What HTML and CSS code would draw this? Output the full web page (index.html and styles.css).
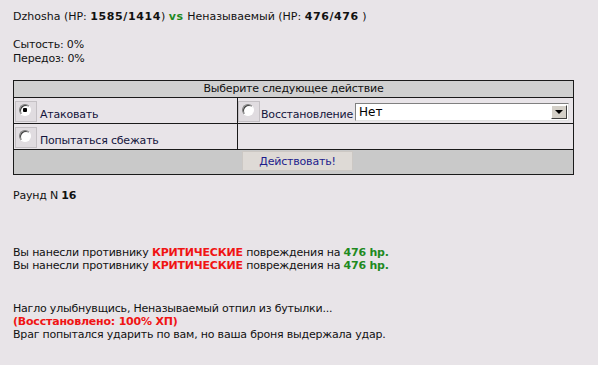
FILE: index.html
```html
<!DOCTYPE html>
<html lang="ru">
<head>
    <meta charset="UTF-8">
    <title>Бой</title>
    <link rel="stylesheet" href="styles.css">
</head>
<body>

    <div class="line">Dzhosha (HP: <b>1585/1414</b>) <b class="green">vs</b> Неназываемый (HP: <b>476/476</b> )</div>

    <div class="stats">
        <div>Сытость: 0%</div>
        <div>Передоз: 0%</div>
    </div>

    <table class="actions">
        <tr>
            <td colspan="2" class="head">Выберите следующее действие</td>
        </tr>
        <tr>
            <td class="col1">
                <label class="opt"><span class="rbox"><input type="radio" name="act" class="rd" checked></span>Атаковать</label>
            </td>
            <td>
                <div class="restore">
                    <label class="opt"><span class="rbox"><input type="radio" name="act" class="rd"></span>Восстановление</label>
                    <div class="select">
                        <span class="sel-text">Нет</span>
                        <span class="arrow"></span>
                    </div>
                </div>
            </td>
        </tr>
        <tr>
            <td class="col1">
                <label class="opt"><span class="rbox"><input type="radio" name="act" class="rd"></span>Попытаться сбежать</label>
            </td>
            <td></td>
        </tr>
        <tr>
            <td colspan="2" class="foot"><button class="btn">Действовать!</button></td>
        </tr>
    </table>

    <div class="round">Раунд N <b>16</b></div>

    <div class="log">
        <div>Вы нанесли противнику <b class="red">КРИТИЧЕСКИЕ</b> повреждения на <b class="green">476 hp.</b></div>
        <div>Вы нанесли противнику <b class="red">КРИТИЧЕСКИЕ</b> повреждения на <b class="green">476 hp.</b></div>
    </div>

    <div class="log log2">
        <div>Нагло улыбнувщись, Неназываемый отпил из бутылки...</div>
        <div><b class="red">(Восстановлено: 100% ХП)</b></div>
        <div>Враг попытался ударить по вам, но ваша броня выдержала удар.</div>
    </div>

</body>
</html>
```

FILE: styles.css
```css
body {
    margin: 0;
    padding: 10px 13px;
    background: #e8e4e8;
    color: #111;
    font-family: "DejaVu Sans", Verdana, sans-serif;
    font-size: 11px;
    line-height: 14px;
    letter-spacing: -0.2px;
}

.green {
    color: #1f8a1f;
}

.red {
    color: #f01414;
}

.line {
    letter-spacing: 0;
}

.line b {
    letter-spacing: 0.6px;
}

.stats {
    margin-top: 14px;
}

.actions {
    margin-top: 14px;
    width: 561px;
    border-collapse: collapse;
    border: 1px solid #1a1a1a;
    color: #14143c;
}

.actions td {
    border: 1px solid #1a1a1a;
    padding: 1px;
    height: 23px;
    vertical-align: top;
}

.actions .head {
    background: #d0d0d0;
    text-align: center;
    height: 16px;
    padding: 0;
    line-height: 16px;
    color: #111;
}

.actions .col1 {
    width: 221px;
}

.actions .foot {
    background: #c9c9c9;
    text-align: center;
    padding: 1px 0 2px;
    height: 21px;
}

.opt {
    display: flex;
    align-items: flex-end;
    height: 23px;
    line-height: 14px;
}

.rbox {
    display: inline-flex;
    width: 22px;
    height: 21px;
    margin-right: 3px;
    border: 1px solid #c4c0c4;
    background: #e0dce0;
    padding: 2px 0 0 3px;
    box-sizing: border-box;
    flex: none;
}

.rd {
    appearance: none;
    -webkit-appearance: none;
    margin: 0;
    width: 12px;
    height: 12px;
    border-radius: 50%;
    border: 1px solid;
    border-color: #808080 #fff #fff #808080;
    background: #fff;
    box-shadow: inset 1px 1px 0 #404040;
}

.rd:checked {
    background: radial-gradient(circle, #000 0 2px, #fff 2.5px);
}

.restore {
    display: flex;
    align-items: flex-end;
}

.restore .opt {
    margin-left: -1px;
}

.restore .rbox {
    margin-right: 1px;
}

.select {
    display: flex;
    align-items: center;
    margin-left: 2px;
    margin-bottom: 1px;
    width: 214px;
    height: 18px;
    box-sizing: border-box;
    border: 1px solid;
    border-color: #808080 #e0e0e0 #e0e0e0 #808080;
    background: #fff;
    padding: 1px;
}

.sel-text {
    flex: 1;
    padding-left: 2px;
    color: #000;
    font-size: 12px;
    letter-spacing: 0;
}

.arrow {
    width: 16px;
    height: 14px;
    box-sizing: border-box;
    background: #d4d0c8;
    border: 1px solid;
    border-color: #fff #404040 #404040 #fff;
    display: flex;
    align-items: center;
    justify-content: center;
}

.arrow::after {
    content: "";
    border-left: 4px solid transparent;
    border-right: 4px solid transparent;
    border-top: 4px solid #000;
}

.btn {
    width: 111px;
    height: 20px;
    margin-left: 8px;
    font-family: "DejaVu Sans", Verdana, sans-serif;
    font-size: 11px;
    letter-spacing: -0.2px;
    color: #1c1c8c;
    background: #dedad6;
    border: 1px solid #ccc8c4;
    padding: 0;
}

.round {
    margin-top: 14px;
}

.log {
    margin-top: 43px;
    line-height: 13px;
}

.log2 {
    margin-top: 30px;
}
```
